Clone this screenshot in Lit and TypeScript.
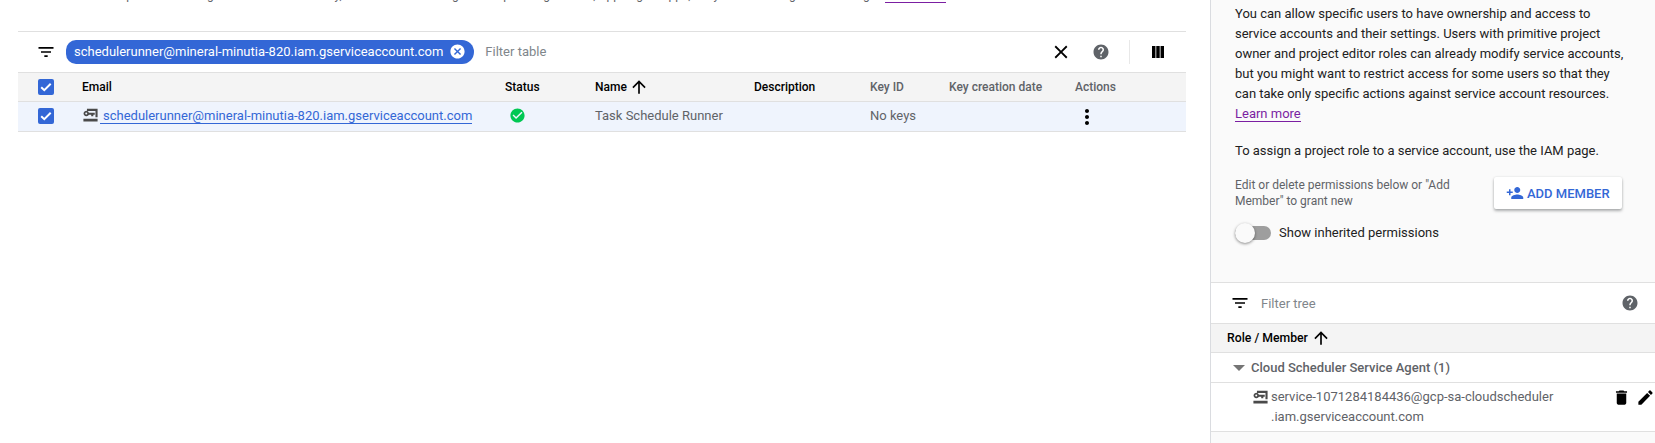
import { css, html, LitElement, svg } from "lit";
import { customElement } from "lit/decorators.js";

const icon = (d: string, size = 24, fill = "currentColor") =>
  html`<svg class="icon" width=${size} height=${size} viewBox="0 0 24 24" fill=${fill}>${svg`<path d=${d}></path>`}</svg>`;

const FILTER = "M10 18h4v-2h-4v2zM3 6v2h18V6H3zm3 7h12v-2H6v2z";
const HELP = "M12 2C6.48 2 2 6.48 2 12s4.48 10 10 10 10-4.48 10-10S17.52 2 12 2zm1 17h-2v-2h2v2zm2.07-7.75l-.9.92C13.45 12.9 13 13.5 13 15h-2v-.5c0-1.1.45-2.1 1.17-2.83l1.24-1.26c.37-.36.59-.86.59-1.41 0-1.1-.9-2-2-2s-2 .9-2 2H8c0-2.21 1.79-4 4-4s4 1.79 4 4c0 .88-.36 1.68-.93 2.25z";
const CLOSE = "M19 6.41L17.59 5 12 10.59 6.41 5 5 6.41 10.59 12 5 17.59 6.41 19 12 13.41 17.59 19 19 17.59 13.41 12z";
const COLUMNS = "M4 4h4.6v16H4zM9.7 4h4.6v16H9.7zM15.4 4H20v16h-4.6z";
const ARROW_UP = "M4 12l1.41 1.41L11 7.83V20h2V7.83l5.58 5.59L20 12l-8-8-8 8z";
const DOTS = "M12 8c1.1 0 2-.9 2-2s-.9-2-2-2-2 .9-2 2 .9 2 2 2zm0 2c-1.1 0-2 .9-2 2s.9 2 2 2 2-.9 2-2-.9-2-2-2zm0 6c-1.1 0-2 .9-2 2s.9 2 2 2 2-.9 2-2-.9-2-2-2z";
const CHECK_CIRCLE = "M12 2C6.48 2 2 6.48 2 12s4.48 10 10 10 10-4.48 10-10S17.52 2 12 2zm-2 15l-5-5 1.41-1.41L10 14.17l7.59-7.59L19 8l-9 9z";
const CANCEL = "M12 2C6.47 2 2 6.47 2 12s4.47 10 10 10 10-4.47 10-10S17.53 2 12 2zm5 13.59L15.59 17 12 13.41 8.41 17 7 15.59 10.59 12 7 8.41 8.41 7 12 10.59 15.59 7 17 8.41 13.41 12 17 15.59z";
const PERSON_ADD = "M15 12c2.21 0 4-1.79 4-4s-1.79-4-4-4-4 1.79-4 4 1.79 4 4 4zm-9-2V7H4v3H1v2h3v3h2v-3h3v-2H6zm9 4c-2.67 0-8 1.34-8 4v2h16v-2c0-2.66-5.33-4-8-4z";
const TRASH = "M6 19c0 1.1.9 2 2 2h8c1.1 0 2-.9 2-2V7H6v12zM19 4h-3.5l-1-1h-5l-1 1H5v2h14V4z";
const PENCIL = "M3 17.25V21h3.75L17.81 9.94l-3.75-3.75L3 17.25zM20.71 7.04a1 1 0 0 0 0-1.41l-2.34-2.34a1 1 0 0 0-1.41 0l-1.83 1.83 3.75 3.75 1.83-1.83z";
// key inside an open box, with a heavy bar underneath
const SERVICE_KEY = "M7 2.5h15v12h-3v-9H7zM6 5.2a4 4 0 0 1 3.8 2.8H18v3h-2v2.2h-3V11H9.8A4 4 0 1 1 6 5.2zm0 2.6a1.4 1.4 0 1 0 0 2.8 1.4 1.4 0 0 0 0-2.8zM2 16.5h20v4H2z";

const checkbox = () => html`<span class="checkbox">
  <svg width="16" height="16" viewBox="0 0 16 16"><path d="M3.2 8.2l3.1 3 6.4-6.4" fill="none" stroke="#fff" stroke-width="2"></path></svg>
</span>`;

@customElement("app-root")
class AppRoot extends LitElement {
  render() {
    return html`<div class="page">
      <main class="main">
        <p class="intro">
          A service account represents a Google Cloud service identity, such as code running on Compute Engine VMs, App Engine apps, or systems running outside Google.
          <span class="intro-link">Learn more</span>
        </p>
        <div class="toolbar">
          <span class="filter-icon">${icon(FILTER, 20)}</span>
          <span class="chip">
            schedulerunner@mineral-minutia-820.iam.gserviceaccount.com
            ${icon(CANCEL, 17)}
          </span>
          <span class="placeholder">Filter table</span>
          <span class="toolbar-actions">
            <span class="close">${icon(CLOSE, 22)}</span>
            <span class="help">${icon(HELP, 18)}</span>
            <span class="divider"></span>
            <span class="columns">${icon(COLUMNS, 18)}</span>
          </span>
        </div>
        <div class="grid head">
          <span class="check-cell">${checkbox()}</span>
          <span class="strong">Email</span>
          <span class="strong">Status</span>
          <span class="strong name-head">Name ${icon(ARROW_UP, 20)}</span>
          <span class="strong">Description</span>
          <span>Key ID</span>
          <span>Key creation date</span>
          <span>Actions</span>
        </div>
        <div class="grid row">
          <span class="check-cell">${checkbox()}</span>
          <span class="email">
            <span class="key">${icon(SERVICE_KEY, 17)}</span>
            <a class="email-link">schedulerunner@mineral-minutia-820.iam.gserviceaccount.com</a>
          </span>
          <span class="status">${icon(CHECK_CIRCLE, 17)}</span>
          <span>Task Schedule Runner</span>
          <span></span>
          <span>No keys</span>
          <span></span>
          <span class="dots">${icon(DOTS)}</span>
        </div>
      </main>

      <aside class="side">
        <div class="info">
          <p class="about">You can allow specific users to have ownership and access to service accounts and their settings. Users with primitive project owner and project editor roles can already modify service accounts, but you might want to restrict access for some users so that they can take only specific actions against service account resources.<br /><a class="learn">Learn more</a></p>
          <p class="assign">To assign a project role to a service account, use the IAM page.</p>
          <div class="member-row">
            <span class="member-text">Edit or delete permissions below or "Add Member" to grant new</span>
            <button class="add">${icon(PERSON_ADD, 18)}ADD MEMBER</button>
          </div>
          <div class="toggle-row">
            <span class="track"><span class="thumb"></span></span>
            Show inherited permissions
          </div>
        </div>
        <div class="tree-filter">
          <span class="filter-icon">${icon(FILTER, 20)}</span>
          <span class="placeholder">Filter tree</span>
          <span class="tree-help">${icon(HELP, 18)}</span>
        </div>
        <div class="tree-head">Role / Member ${icon(ARROW_UP, 20)}</div>
        <div class="role"><span class="caret"></span>Cloud Scheduler Service Agent (1)</div>
        <div class="member">
          <span class="key">${icon(SERVICE_KEY, 17)}</span>
          <span class="member-name">service-1071284184436@gcp-sa-cloudscheduler<br />.iam.gserviceaccount.com</span>
          <span class="member-actions">${icon(TRASH, 19)}${icon(PENCIL, 19)}</span>
        </div>
        <div class="side-rest"></div>
      </aside>
    </div>`;
  }

  static styles = css`
    :host {
      display: block;
      font-family: Roboto, "Liberation Sans", sans-serif;
      color: #5f6368;
    }
    * {
      box-sizing: border-box;
    }
    .icon {
      display: block;
      flex: none;
    }
    .page {
      display: grid;
      grid-template-columns: 1210px 445px;
      height: 443px;
      overflow: hidden;
      background: #fff;
    }
    .main {
      padding: 0 24px 0 18px;
      min-width: 0;
    }
    .intro {
      margin: -15px 0 0;
      height: 46px;
      font-size: 12px;
      line-height: 20px;
      color: #5f6368;
      white-space: nowrap;
    }
    .intro-link {
      color: #7b1fa2;
      border-bottom: 1px solid #7b1fa2;
    }
    .toolbar {
      height: 42px;
      display: flex;
      align-items: center;
      border-top: 1px solid #e0e0e0;
      border-bottom: 1px solid #e0e0e0;
      padding: 0 19px 0 18px;
      font-size: 13px;
    }
    .filter-icon {
      color: #000;
      width: 20px;
      flex: none;
    }
    .chip {
      margin-left: 10px;
      height: 24px;
      display: flex;
      align-items: center;
      gap: 6px;
      padding: 0 8px 1px 8px;
      border-radius: 10px 12px 12px 10px;
      background: #3367d6;
      color: #fff;
      font-size: 13px;
      white-space: nowrap;
    }
    .placeholder {
      color: #80868b;
      font-size: 13px;
    }
    .toolbar .placeholder {
      margin: 0 0 2px 11px;
    }
    .toolbar-actions {
      margin-left: auto;
      display: flex;
      align-items: center;
    }
    .close {
      color: #000;
    }
    .help {
      color: #5f6368;
      margin-left: 20px;
    }
    .divider {
      width: 1px;
      height: 24px;
      margin: 0 19px 0 19px;
      background: #e8e8e8;
    }
    .columns {
      color: #000;
    }
    .grid {
      display: grid;
      grid-template-columns: 64px 423px 90px 159px 116px 79px 126px 1fr;
      align-items: center;
      font-size: 12px;
    }
    .head {
      height: 29px;
      background: #f4f4f4;
      border-bottom: 1px solid #e0e0e0;
      font-weight: 500;
    }
    .strong {
      color: #000;
    }
    .name-head {
      display: flex;
      align-items: center;
      gap: 2px;
    }
    .row {
      height: 30px;
      padding-bottom: 2px;
      background: #eff4fd;
      border-bottom: 1px solid #e0e0e0;
      font-size: 13px;
    }
    .row .check-cell {
      padding-top: 1px;
    }
    .check-cell {
      padding-left: 20px;
    }
    .checkbox {
      display: flex;
      align-items: center;
      justify-content: center;
      width: 16px;
      height: 16px;
      border-radius: 2px;
      background: #3367d6;
    }
    .email {
      display: flex;
      align-items: center;
    }
    .key {
      color: #4a4a4a;
    }
    .email-link {
      margin-left: 1px;
      padding-left: 3px;
      color: #3367d6;
      border-bottom: 1px solid #3367d6;
      line-height: 15px;
      white-space: nowrap;
    }
    .status {
      color: #00c853;
      padding-left: 4px;
    }
    .dots {
      color: #000;
      padding-top: 2px;
    }
    .side {
      background: #fafafa;
      border-left: 1px solid #dadce0;
      display: flex;
      flex-direction: column;
      min-width: 0;
    }
    .info {
      height: 283px;
      flex: none;
      padding: 0 29px 0 24px;
      border-bottom: 1px solid #e0e0e0;
      font-size: 13px;
      color: #212121;
    }
    .about {
      margin: 4px 0 0;
      line-height: 20px;
    }
    .learn {
      color: #7b1fa2;
      border-bottom: 1px solid #7b1fa2;
    }
    .assign {
      margin: 17px 0 0;
      line-height: 20px;
    }
    .member-row {
      width: 387px;
      margin-top: 16px;
      display: flex;
      align-items: flex-start;
      justify-content: space-between;
    }
    .member-text {
      width: 230px;
      font-size: 12px;
      line-height: 16px;
      color: #5f6368;
    }
    .add {
      display: flex;
      align-items: center;
      gap: 3px;
      width: 128px;
      height: 32px;
      padding: 0 0 0 12px;
      border: 0;
      border-radius: 2px;
      background: #fff;
      box-shadow: 0 2px 3px rgba(60, 64, 67, 0.4), 0 0 2px rgba(60, 64, 67, 0.15);
      color: #3367d6;
      font: 500 13px Roboto, sans-serif;
      white-space: nowrap;
    }
    .toggle-row {
      margin-top: 16px;
      display: flex;
      align-items: center;
      gap: 8px;
      font-size: 13px;
      line-height: 16px;
      color: #212121;
    }
    .track {
      position: relative;
      display: block;
      width: 36px;
      height: 14px;
      border-radius: 7px;
      background: #9e9e9e;
    }
    .thumb {
      position: absolute;
      left: 0;
      top: -3px;
      width: 20px;
      height: 20px;
      border-radius: 50%;
      background: #fafafa;
      box-shadow: 0 1px 3px rgba(0, 0, 0, 0.45);
    }
    .tree-filter {
      height: 41px;
      flex: none;
      display: flex;
      align-items: center;
      padding: 0 16px 0 19px;
      background: #fff;
      border-bottom: 1px solid #e0e0e0;
    }
    .tree-filter .placeholder {
      margin-left: 11px;
    }
    .tree-help {
      margin-left: auto;
      color: #5f6368;
    }
    .tree-head {
      height: 29px;
      flex: none;
      display: flex;
      align-items: center;
      gap: 3px;
      padding-left: 16px;
      background: #f4f4f4;
      border-bottom: 1px solid #e0e0e0;
      color: #000;
      font-size: 12.25px;
      font-weight: 500;
    }
    .role {
      height: 30px;
      flex: none;
      display: flex;
      align-items: center;
      padding-left: 22px;
      background: #fff;
      border-bottom: 1px solid #e0e0e0;
      font-size: 13px;
      font-weight: 500;
    }
    .caret {
      width: 0;
      height: 0;
      margin-right: 6px;
      border-left: 6px solid transparent;
      border-right: 6px solid transparent;
      border-top: 6px solid #757575;
    }
    .member {
      height: 49px;
      flex: none;
      display: flex;
      align-items: flex-start;
      padding: 4px 0 0 41px;
      background: #fff;
      border-bottom: 1px solid #e0e0e0;
      font-size: 13px;
      line-height: 20px;
    }
    .member .key {
      margin: 2px 2px 0 0;
    }
    .member-name {
      white-space: nowrap;
    }
    .member-actions {
      margin-left: auto;
      display: flex;
      align-items: center;
      gap: 5px;
      color: #000;
      padding-top: 1px;
    }
    .side-rest {
      flex: 1;
      background: #fafafa;
    }
  `;
}
